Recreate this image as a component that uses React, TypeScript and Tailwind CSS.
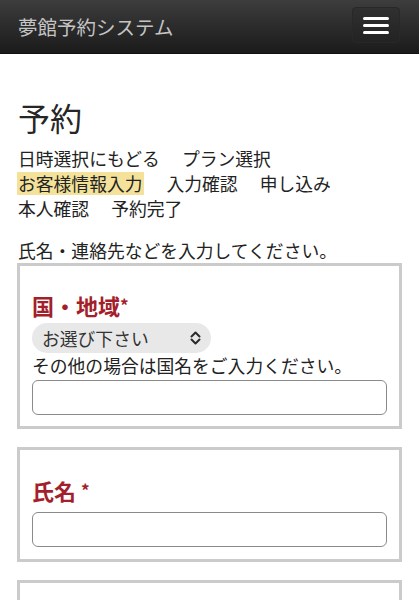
const STEPS = [
  { label: '日時選択にもどる' },
  { label: 'プラン選択' },
  { label: 'お客様情報入力', current: true },
  { label: '入力確認' },
  { label: '申し込み' },
  { label: '本人確認' },
  { label: '予約完了' },
];

function SelectChevrons() {
  return (
    <svg width="11" height="14" viewBox="0 0 11 14" fill="none" stroke="#2a2a2a" strokeWidth="2" strokeLinecap="round" strokeLinejoin="round">
      <path d="M1.5 5.5 L5.5 1.5 L9.5 5.5" />
      <path d="M1.5 8.5 L5.5 12.5 L9.5 8.5" />
    </svg>
  );
}

export default function App() {
  return (
    <div className="min-h-[600px] bg-white font-[family-name:'Noto_Sans_CJK_JP','Noto_Sans',sans-serif] text-[#222]">
      {/* navbar */}
      <header className="h-[54px] flex items-start justify-between pl-[18px] pr-[19px] bg-gradient-to-b from-[#3d3d3d] to-[#1b1b1b] border-b border-[#111]">
        <span className="mt-[13px] text-[19.5px] leading-[28px] text-[#c4c4c4]">夢館予約システム</span>
        <button className="mt-[7px] w-[48px] h-[36px] flex flex-col items-center justify-center gap-[4px] rounded-[4px] border border-[#282828] bg-[#262626]/40">
          <span className="block w-[26px] h-[3px] rounded-sm bg-white" />
          <span className="block w-[26px] h-[3px] rounded-sm bg-white" />
          <span className="block w-[26px] h-[3px] rounded-sm bg-white" />
        </button>
      </header>

      <main className="px-[17px] pb-10">
        <h1 className="mt-[44px] pl-px text-[32px] leading-[38px] font-normal text-[#262626]">予約</h1>

        <nav className="mt-[10px] flex flex-wrap gap-x-[21px] text-[17.8px]">
          {STEPS.map((s) => (
            <div key={s.label} className="h-[25px] flex items-center">
              {s.current
                ? <span className="h-[23px] leading-[23px] bg-[#f4e29b] pl-px pr-[2px]">{s.label}</span>
                : <span className="pl-px">{s.label}</span>}
            </div>
          ))}
        </nav>

        <p className="mt-[17px] pl-px text-[17.8px] leading-[25px]">氏名・連絡先などを入力してください。</p>

        <section className="border-[3px] border-[#cbcbcb] px-[12px] pt-[24px] pb-[11px]">
          <h2 className="text-[22px] leading-[30px] font-bold text-[#a21f2b]">国・地域<span className="text-[17px] align-top">*</span></h2>
          <div className="mt-[3px] w-[179px] h-[30px] rounded-full bg-[#e8e8e8] flex items-center justify-between px-[10px] text-[17.8px] text-[#333]">
            <span>お選び下さい</span>
            <SelectChevrons />
          </div>
          <p className="text-[17.8px] leading-[25px]">その他の場合は国名をご入力ください。</p>
          <input className="mt-[2px] block w-full h-[35px] rounded-[6px] border border-[#8a8a8a] px-2 text-[16px] outline-none" />
        </section>

        <section className="mt-[18px] border-[3px] border-[#cbcbcb] px-[12px] pt-[25px] pb-[12px]">
          <h2 className="text-[22px] leading-[30px] font-bold text-[#a21f2b]">氏名 <span className="text-[17px] align-top">*</span></h2>
          <input className="mt-[7px] block w-full h-[35px] rounded-[6px] border border-[#8a8a8a] px-2 text-[16px] outline-none" />
        </section>

        <section className="mt-[18px] h-[120px] border-[3px] border-[#cbcbcb]" />
      </main>
    </div>
  );
}
